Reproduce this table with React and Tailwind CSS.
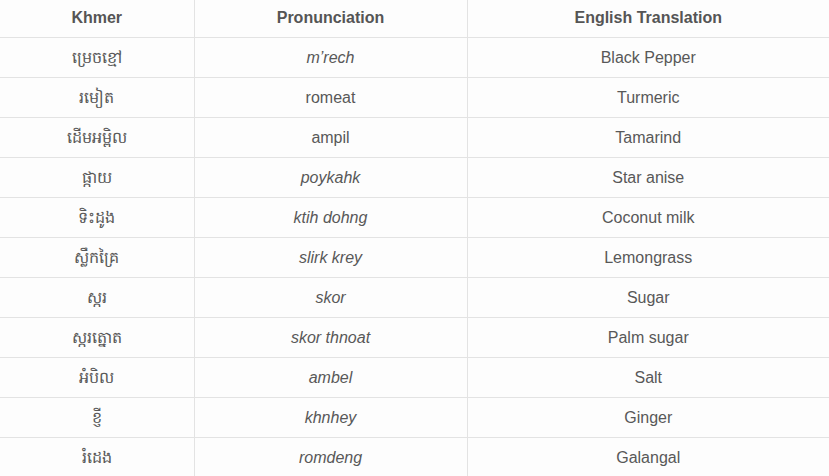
const rows = [
    ["ម្រេចខ្មៅ", "m’rech", "Black Pepper", true],
    ["រមៀត", "romeat", "Turmeric", false],
    ["ដើមអម្ពិល", "ampil", "Tamarind", false],
    ["ផ្កាយ", "poykahk", "Star anise", true],
    ["ទិះដូង", "ktih dohng", "Coconut milk", true],
    ["ស្លឹកគ្រៃ", "slirk krey", "Lemongrass", true],
    ["ស្ករ", "skor", "Sugar", true],
    ["ស្ករត្នោត", "skor thnoat", "Palm sugar", true],
    ["អំបិល", "ambel", "Salt", true],
    ["ខ្ញី", "khnhey", "Ginger", true],
    ["រំដេង", "romdeng", "Galangal", true],
]

function App() {
    return (
        <div className="h-[476px] w-[829px] overflow-hidden bg-[#fdfdfd] font-['Liberation_Sans',Arial,sans-serif] text-[16px] text-[#585858]">
            <table className="w-full table-fixed border-collapse">
                <colgroup>
                    <col className="w-[194px]" />
                    <col className="w-[273px]" />
                    <col />
                </colgroup>
                <thead>
                    <tr className="h-[37px] border-b border-[#e3e3e3]">
                        <th className="border-r border-[#e3e3e3] font-bold text-[#555]">Khmer</th>
                        <th className="border-r border-[#e3e3e3] font-bold text-[#555]">Pronunciation</th>
                        <th className="font-bold text-[#555]">English Translation</th>
                    </tr>
                </thead>
                <tbody>
                    {rows.map(([khmer, sound, english, italic]) => (
                        <tr key={english} className="h-[40px] border-b border-[#e3e3e3]">
                            <td className="border-r border-[#e3e3e3] pt-[2px] text-center">{khmer}</td>
                            <td className={`border-r border-[#e3e3e3] pt-[2px] text-center ${italic ? "italic" : ""}`}>{sound}</td>
                            <td className="pt-[2px] text-center">{english}</td>
                        </tr>
                    ))}
                </tbody>
            </table>
        </div>
    )
}

export default App
